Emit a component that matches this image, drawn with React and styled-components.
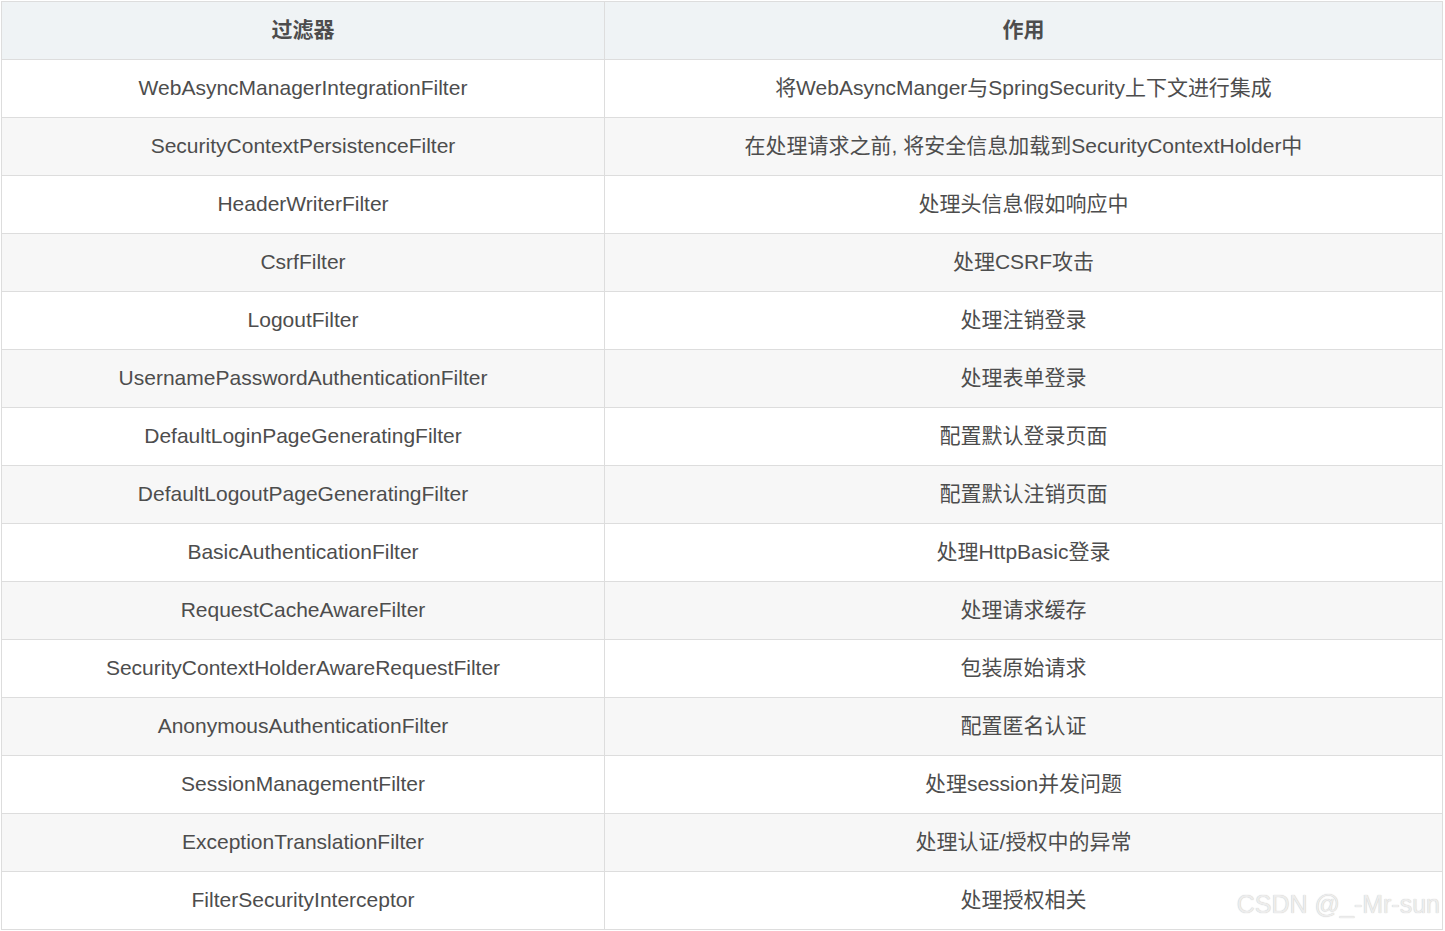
import React from "react";
import styled, { createGlobalStyle } from "styled-components";

const Global = createGlobalStyle`
  html, body { margin: 0; padding: 0; background: #fff; }
  body { font-family: "Liberation Sans", Arial, "Noto Sans CJK SC", sans-serif; }
`;

const Wrap = styled.div`
  position: relative;
  padding: 1px 0 0 1px;
  width: 1442px;
`;

const Table = styled.table`
  width: 1442px;
  border-collapse: collapse;
  table-layout: fixed;
  color: #4d4d4d;
  font-family: "Liberation Sans", Arial, "Noto Sans CJK SC", sans-serif;
  font-size: 21px;
  line-height: 24px;
`;

const HeadCell = styled.th`
  height: 56px;
  padding: 0 0 1px;
  border: 1px solid #dddddd;
  background: #eff3f5;
  font-weight: bold;
  text-align: center;
  vertical-align: middle;
  color: #4d4d4d;
`;

const Row = styled.tr`
  background: ${(p) => (p.$odd ? "#f7f7f7" : "#ffffff")};
`;

const Cell = styled.td`
  height: 56px;
  padding: 0 0 1px;
  border: 1px solid #dddddd;
  text-align: center;
  vertical-align: middle;
`;

const Watermark = styled.div`
  position: absolute;
  right: 3px;
  bottom: 11px;
  font-family: "Liberation Sans", Arial, sans-serif;
  font-size: 25px;
  line-height: 30px;
  color: #ededed;
  text-shadow: 0 0 1px #bdbdbd;
  pointer-events: none;
`;

const rows = [
  ["WebAsyncManagerIntegrationFilter", "将WebAsyncManger与SpringSecurity上下文进行集成"],
  ["SecurityContextPersistenceFilter", "在处理请求之前, 将安全信息加载到SecurityContextHolder中"],
  ["HeaderWriterFilter", "处理头信息假如响应中"],
  ["CsrfFilter", "处理CSRF攻击"],
  ["LogoutFilter", "处理注销登录"],
  ["UsernamePasswordAuthenticationFilter", "处理表单登录"],
  ["DefaultLoginPageGeneratingFilter", "配置默认登录页面"],
  ["DefaultLogoutPageGeneratingFilter", "配置默认注销页面"],
  ["BasicAuthenticationFilter", "处理HttpBasic登录"],
  ["RequestCacheAwareFilter", "处理请求缓存"],
  ["SecurityContextHolderAwareRequestFilter", "包装原始请求"],
  ["AnonymousAuthenticationFilter", "配置匿名认证"],
  ["SessionManagementFilter", "处理session并发问题"],
  ["ExceptionTranslationFilter", "处理认证/授权中的异常"],
  ["FilterSecurityInterceptor", "处理授权相关"],
];

export default function App() {
  return (
    <>
      <Global />
      <Wrap>
        <Table>
          <colgroup>
            <col style={{ width: "603px" }} />
            <col />
          </colgroup>
          <thead>
            <tr>
              <HeadCell>过滤器</HeadCell>
              <HeadCell>作用</HeadCell>
            </tr>
          </thead>
          <tbody>
            {rows.map(([a, b], i) => (
              <Row key={a} $odd={i % 2 === 1}>
                <Cell>{a}</Cell>
                <Cell>{b}</Cell>
              </Row>
            ))}
          </tbody>
        </Table>
        <Watermark>CSDN @_-Mr-sun</Watermark>
      </Wrap>
    </>
  );
}
